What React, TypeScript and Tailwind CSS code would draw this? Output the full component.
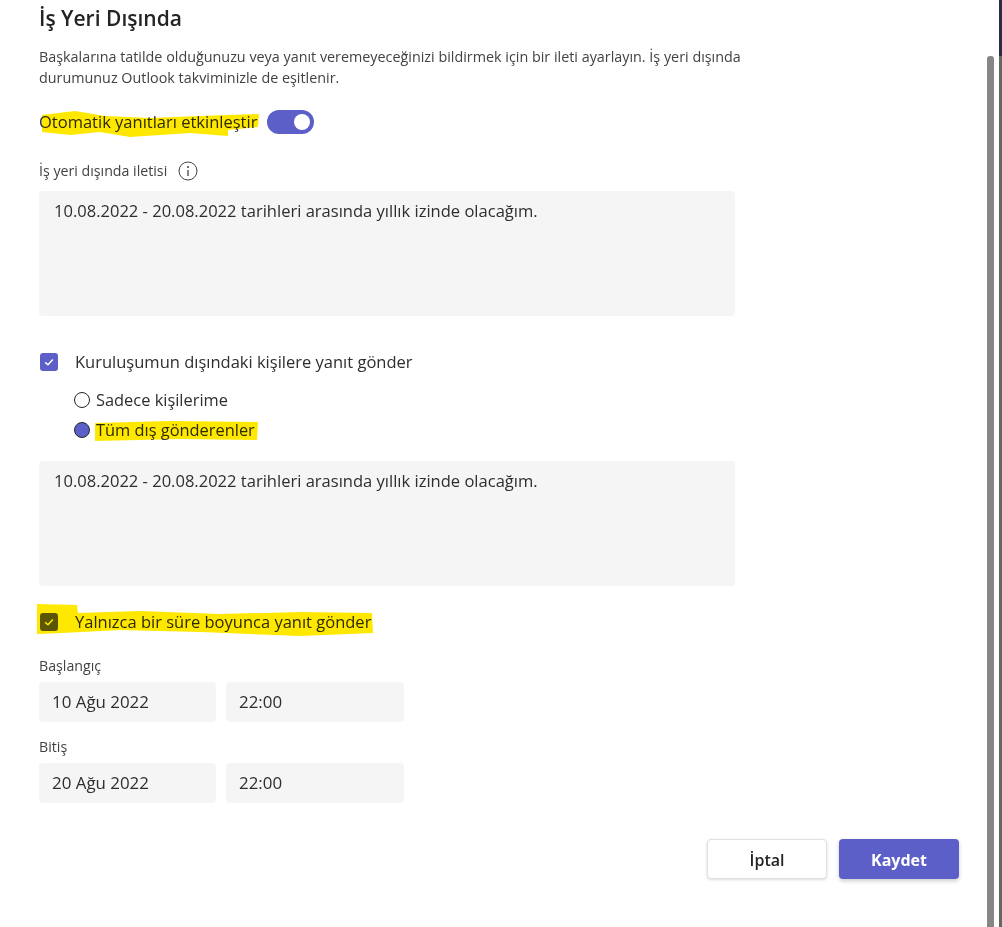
import type { ReactNode } from 'react'

function Check() {
  return (
    <span className="flex h-[18px] w-[18px] items-center justify-center rounded-[3px] bg-[#5b5fc7]">
      <svg width="12" height="12" viewBox="0 0 12 12" fill="none">
        <path d="M2.2 6.4 L5 8.8 L9.8 3.4" stroke="white" strokeWidth="1.5" />
      </svg>
    </span>
  )
}

function Box({ children, className }: { children: ReactNode; className: string }) {
  return <div className={`rounded-[4px] bg-[#f5f5f5] text-[#2e2e2e] ${className}`}>{children}</div>
}

function DateRow({ label, date, time }: { label: string; date: string; time: string }) {
  return (
    <div>
      <div className="text-[14.2px] leading-[18px] text-[#424242]">{label}</div>
      <div className="mt-[7px] flex gap-[10px]">
        <Box className="flex h-[40px] w-[177px] items-center pl-[13px] text-[16.9px]">{date}</Box>
        <Box className="flex h-[40px] w-[178px] items-center pl-[13px] text-[16.9px]">{time}</Box>
      </div>
    </div>
  )
}

export default function App() {
  const message = '10.08.2022 - 20.08.2022 tarihleri arasında yıllık izinde olacağım.'
  return (
    <div className="relative h-[927px] w-[1002px] overflow-hidden bg-white font-['Open_Sans','Noto_Sans',sans-serif] text-[#2e2e2e]">
      <div className="w-[735px] pl-[39px]">
        <h1 className="pt-[4px] text-[21px] leading-[28px] font-semibold text-[#242424]">İş Yeri Dışında</h1>
        <p className="mt-[14px] w-[720px] text-[14.35px] leading-[21px] text-[#424242]">
          Başkalarına tatilde olduğunuzu veya yanıt veremeyeceğinizi bildirmek için bir ileti ayarlayın. İş yeri dışında
          durumunuz Outlook takviminizle de eşitlenir.
        </p>
        <div className="mt-[22px] flex h-[24px] items-center gap-[10px]">
          <span className="text-[16.5px]">Otomatik yanıtları etkinleştir</span>
          <span className="flex h-[24px] w-[47px] items-center justify-end rounded-full bg-[#5b5fc7] pr-[4px]">
            <span className="h-[16px] w-[16px] rounded-full bg-white" />
          </span>
        </div>
        <div className="mt-[25px] flex h-[24px] items-center gap-[11px] text-[14.2px] text-[#424242]">
          <span>İş yeri dışında iletisi</span>
          <svg width="20" height="20" viewBox="0 0 20 20" fill="none" stroke="#424242">
            <circle cx="10" cy="10" r="9" />
            <path d="M10 9 V15" strokeWidth="1.3" />
            <circle cx="10" cy="6" r="0.6" fill="#424242" />
          </svg>
        </div>
        <Box className="mt-[8px] h-[125px] px-[15px] py-[9px] text-[16.55px] leading-[22px]">{message}</Box>
        <div className="mt-[35px] flex h-[22px] items-center gap-[17px] pl-[1px]">
          <Check />
          <span className="text-[16.5px]">Kuruluşumun dışındaki kişilere yanıt gönder</span>
        </div>
        <div className="mt-[16px] flex h-[22px] items-center gap-[6px] pl-[35px] text-[16.4px]">
          <span className="h-[16px] w-[16px] rounded-full border border-[#242424]" />
          <span>Sadece kişilerime</span>
        </div>
        <div className="mt-[8px] flex h-[22px] items-center gap-[6px] pl-[35px] text-[16.4px]">
          <span className="h-[16px] w-[16px] rounded-full border border-[#242424] bg-[#5b5fc7]" />
          <span>Tüm dış gönderenler</span>
        </div>
        <Box className="mt-[20px] h-[125px] px-[15px] py-[9px] text-[16.55px] leading-[22px]">{message}</Box>
        <div className="mt-[25px] flex h-[22px] items-center gap-[17px] pl-[1px]">
          <Check />
          <span className="text-[16.5px]">Yalnızca bir süre boyunca yanıt gönder</span>
        </div>
        <div className="mt-[24px] flex flex-col gap-[16px]">
          <DateRow label="Başlangıç" date="10 Ağu 2022" time="22:00" />
          <DateRow label="Bitiş" date="20 Ağu 2022" time="22:00" />
        </div>
      </div>

      <div className="absolute top-[839px] left-[707px] flex gap-[12px]">
        <button className="h-[40px] w-[120px] rounded-[4px] border border-[#e0e0e0] bg-white pt-[1px] text-[16px] font-semibold text-[#242424] shadow-[0_1px_3px_rgba(0,0,0,0.14)]">
          İptal
        </button>
        <button className="h-[40px] w-[120px] rounded-[4px] bg-[#5b5fc7] pt-[1px] text-[16px] font-bold text-white shadow-[0_2px_4px_rgba(0,0,0,0.2)]">
          Kaydet
        </button>
      </div>

      {/* yellow marker strokes */}
      <svg className="pointer-events-none absolute top-0 left-0 mix-blend-multiply" width="1002" height="927" fill="#ffe800">
        <path d="M42 115 L75 111 L105 116 L150 118 L200 116 L259 114 L258 127 L228 130 L228 136 L190 133 L130 137 L100 132 L70 135 L42 132 Z" />
        <path d="M95 423 L170 421 L258 422 L257 440 L180 439 L95 441 Z" />
        <path d="M37 604 L77 605 L78 613 L140 611 L220 614 L300 612 L372 613 L373 633 L300 636 L200 632 L120 630 L62 633 L37 634 Z" />
      </svg>

      {/* scrollbar */}
      <div className="absolute top-[56px] bottom-0 left-[987px] w-[7px] rounded-t-[3px] bg-[#868686]" />
      <div className="absolute top-0 left-[999px] h-[56px] w-[3px] bg-[#2b2b45]" />
      <div className="absolute top-[56px] bottom-0 left-[999px] w-[3px] bg-[#666666]" />
    </div>
  )
}
